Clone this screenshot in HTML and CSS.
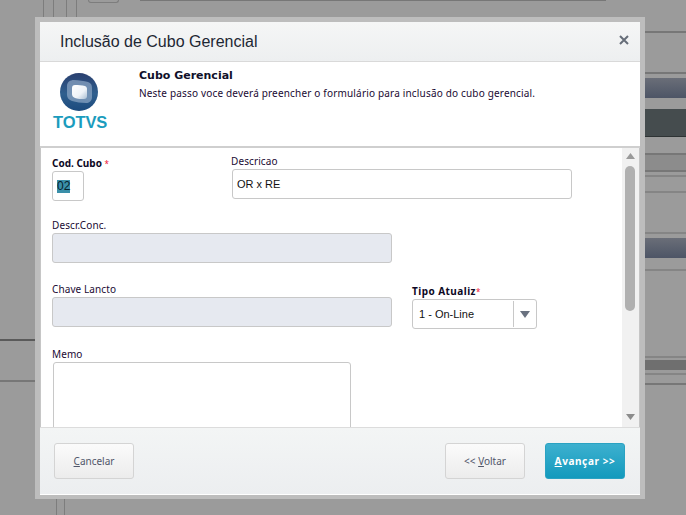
FILE: index.html
```html
<!DOCTYPE html>
<html lang="pt">
<head>
<meta charset="utf-8">
<title>Inclusão de Cubo Gerencial</title>
<link rel="stylesheet" href="styles.css">
</head>
<body>
<div class="backdrop">
  <div class="side side-left">
    <div class="s" style="height:339px"></div>
    <div class="s line-dark"></div>
    <div class="s" style="height:39px"></div>
    <div class="s line"></div>
  </div>
  <div class="middle">
    <div class="top-marks">
      <i class="vline v1"></i><i class="vline v2"></i><i class="vline v3"></i><i class="vline v4"></i><i class="mini-btn"></i><i class="top-rule"></i>
    </div>
    <div class="bottom-marks"><i class="vline b1"></i><i class="vline b2"></i></div>
  </div>
  <div class="side side-right">
    <div class="s" style="height:31px"></div>
    <div class="s line"></div>
    <div class="s" style="height:39px"></div>
    <div class="s line"></div>
    <div class="s" style="height:4px"></div>
    <div class="s band-blue" style="height:20px"></div>
    <div class="s" style="height:11px"></div>
    <div class="s band-dark" style="height:28px"></div>
    <div class="s" style="height:16px"></div>
    <div class="s line"></div>
    <div class="s band-soft" style="height:15px"></div>
    <div class="s line"></div>
    <div class="s" style="height:3px"></div>
    <div class="s line-soft"></div>
    <div class="s" style="height:14px"></div>
    <div class="s line-soft"></div>
    <div class="s" style="height:39px"></div>
    <div class="s line-soft"></div>
    <div class="s" style="height:4px"></div>
    <div class="s band-blue" style="height:20px"></div>
    <div class="s" style="height:11px"></div>
    <div class="s line-soft"></div>
    <div class="s" style="height:85px"></div>
    <div class="s line-soft"></div>
    <div class="s" style="height:2px"></div>
    <div class="s band-grey" style="height:10px"></div>
    <div class="s" style="height:3px"></div>
    <div class="s line-soft"></div>
    <div class="s" style="height:8px"></div>
    <div class="s line"></div>
  </div>
</div>

<div class="modal">
  <div class="dialog">
    <header class="head">
      <h1 class="title">Inclusão de Cubo Gerencial</h1>
      <button class="close" type="button" aria-label="Fechar">
        <svg width="10" height="10" viewBox="0 0 10 10"><path d="M1 1 9 9M9 1 1 9" stroke="#666d78" stroke-width="2" fill="none"/></svg>
      </button>
    </header>

    <section class="intro">
      <div class="brand">
        <svg class="globe" width="38" height="38" viewBox="0 0 38 38">
          <defs>
            <linearGradient id="ball" x1="0" y1="0" x2="0" y2="1">
              <stop offset="0" stop-color="#2a3f6f"/>
              <stop offset=".55" stop-color="#2f5f8e"/>
              <stop offset="1" stop-color="#1c4a7d"/>
            </linearGradient>
            <linearGradient id="pane" x1="0" y1="0" x2="1" y2="1">
              <stop offset="0" stop-color="#ffffff"/>
              <stop offset=".6" stop-color="#eef3f8"/>
              <stop offset="1" stop-color="#a9bed3"/>
            </linearGradient>
          </defs>
          <circle cx="19" cy="19" r="19" fill="url(#ball)"/>
          <path d="M7 13c0-4 3-6 7-6 5 0 10 1 14 2 3 1 4 3 4 6v9c0 4-3 6-6 6-5 0-10-1-14-2-3-1-5-3-5-6z" fill="#8fa8c6" opacity=".7"/>
          <path d="M12 15c0-2 1-3 3-3 3 0 7 0 10 1 2 1 2 2 2 4v6c0 2-1 3-3 3-3 0-7 0-9-1-2-1-3-2-3-4z" fill="url(#pane)"/>
        </svg>
        <span class="wordmark">TOTVS</span>
      </div>
      <div class="intro-text">
        <h2 class="intro-title">Cubo Gerencial</h2>
        <p class="intro-desc">Neste passo voce deverá preencher o formulário para inclusão do cubo gerencial.</p>
      </div>
    </section>

    <section class="pane">
      <form class="form">
        <div class="row row-first">
          <div class="field field-code">
            <label class="label label-strong">Cod. Cubo <b class="req">*</b></label>
            <div class="input input-code"><span class="selected">02</span></div>
          </div>
          <div class="field">
            <label class="label label-shift">Descricao</label>
            <div class="input input-wide">OR x RE</div>
          </div>
        </div>
        <div class="row row-second">
          <div class="field">
            <label class="label">Descr.Conc.</label>
            <div class="input input-mid disabled"></div>
          </div>
        </div>
        <div class="row row-third">
          <div class="field">
            <label class="label">Chave Lancto</label>
            <div class="input input-mid disabled"></div>
          </div>
          <div class="field field-type">
            <label class="label label-strong label-wide">Tipo Atualiz<b class="req">*</b></label>
            <div class="select">
              <span class="select-value">1 - On-Line</span>
              <span class="select-arrow"><svg width="10" height="7" viewBox="0 0 10 7"><path d="M0 0h10L5 7z" fill="#6a7280"/></svg></span>
            </div>
          </div>
        </div>
        <div class="row row-fourth">
          <div class="field">
            <label class="label">Memo</label>
            <div class="memo"></div>
          </div>
        </div>
      </form>
      <div class="scrollbar">
        <svg class="arrow" width="9" height="6" viewBox="0 0 9 6"><path d="M4.5 0 9 6H0z" fill="#9a9a9a"/></svg>
        <div class="thumb-track"><div class="thumb"></div></div>
        <svg class="arrow" width="9" height="6" viewBox="0 0 9 6"><path d="M0 0h9L4.500 6z" fill="#8c8c8c"/></svg>
      </div>
    </section>

    <footer class="foot">
      <button class="btn" type="button"><u>C</u>ancelar</button>
      <div class="foot-right">
        <button class="btn" type="button">&lt;&lt; <u>V</u>oltar</button>
        <button class="btn btn-primary" type="button"><u>A</u>vançar &gt;&gt;</button>
      </div>
    </footer>
  </div>
</div>
</body>
</html>
```
FILE: styles.css
```css
* { box-sizing: border-box; }
html, body { margin: 0; padding: 0; }
body {
  width: 686px;
  height: 515px;
  overflow: hidden;
  position: relative;
  background: #9b9b9b;
  font-family: "Liberation Sans", Arial, sans-serif;
}

/* dimmed page behind the dialog */
.backdrop { display: flex; width: 686px; height: 515px; }
.side { flex: none; }
.side-left { width: 35px; }
.side-right { width: 41px; }
.middle { flex: 1; display: flex; flex-direction: column; justify-content: space-between; }
.s { display: block; }
.line { height: 2px; background: #777; }
.line-dark { height: 2px; background: #5a5a5a; }
.line-soft { height: 2px; background: #858585; }
.band-blue { background: linear-gradient(#6a6e78, #4d5566); }
.band-dark { background: #454c4e; border-bottom: 1px solid #2e3334; }
.band-soft { background: #8c8c8c; }
.band-grey { background: #6f6f6f; }
.top-marks { height: 17px; display: flex; }
.bottom-marks { height: 16px; display: flex; }
.vline { display: block; width: 1px; background: #7d7d7d; }
.v1 { margin-left: 8px; }
.v2 { margin-left: 9px; }
.v3 { margin-left: 12px; }
.v4 { margin-left: 9px; }
.mini-btn { display: block; width: 31px; height: 3px; margin-left: 11px; border: 1px solid #7d7d7d; border-top: 0; border-radius: 0 0 3px 3px; }
.top-rule { display: block; width: 466px; height: 1px; margin-left: 21px; background: #777; }
.b1 { margin-left: 21px; }
.b2 { margin-left: 7px; }

/* dialog */
.modal {
  position: absolute;
  left: 35px;
  top: 17px;
  width: 610px;
  height: 482px;
  padding: 5px 5px 4px;
  background: #bdbdbd;
}
.dialog {
  display: flex;
  flex-direction: column;
  height: 473px;
  background: #c6c6c6;
}
.head {
  flex: none;
  height: 40px;
  padding: 0 11px 0 20px;
  display: flex;
  align-items: center;
  justify-content: space-between;
  background: linear-gradient(#f5f6f6, #edeff0);
  border-bottom: 1px solid #d9d9d9;
}
.title {
  margin: 0;
  font-size: 16px;
  font-weight: 400;
  color: #1d2733;
}
.close {
  width: 10px;
  height: 10px;
  margin-bottom: 4px;
  padding: 0;
  border: 0;
  background: none;
  display: block;
}
.close svg { display: block; }

.intro {
  flex: none;
  height: 86px;
  display: flex;
  border-bottom: 2px solid #cfcfcf;
  background: #fff;
}
.brand {
  flex: none;
  width: 99px;
  padding: 11px 0 0 13px;
  display: flex;
  flex-direction: column;
  align-items: flex-start;
}
.globe { display: block; margin-left: 7px; }
.wordmark {
  margin-top: 3px;
  font-size: 16.5px;
  line-height: 16px;
  font-weight: 700;
  letter-spacing: -.1px;
  color: #1b9cbd;
}
.intro-text { padding-top: 7px; }
.intro-title {
  margin: 0;
  font-family: "DejaVu Sans", Verdana, sans-serif;
  font-size: 11px;
  line-height: 14px;
  font-weight: 700;
  color: #10102a;
}
.intro-desc {
  margin: 3px 0 0;
  font-family: "Noto Sans", Tahoma, sans-serif;
  font-size: 10px;
  line-height: 14px;
  letter-spacing: .175px;
  color: #1a0a33;
}

/* scrolling form area */
.pane {
  flex: none;
  height: 279px;
  display: flex;
  margin: 0 1px;
  overflow: hidden;
}
.form {
  flex: 1;
  min-width: 0;
  padding: 5px 0 0 11px;
  background: #fff;
}
.row { display: flex; align-items: flex-start; }
.row-second { margin-top: 16px; }
.row-third { margin-top: 18px; }
.row-fourth { margin-top: 17px; }
.field { flex: none; }
.field-code { width: 180px; padding-top: 2px; }
.field-type { margin-left: 20px; padding-top: 2px; }
.label {
  display: block;
  height: 16px;
  font-family: "Noto Sans", Tahoma, sans-serif;
  font-size: 10px;
  line-height: 16px;
  letter-spacing: .1px;
  color: #1a0a33;
}
.label-strong { font-weight: 700; letter-spacing: 0; color: #0d0824; }
.label-wide { letter-spacing: .45px; }
.label-shift { margin-left: -1px; }
.req { color: #ee1133; font-size: 8px; font-weight: 400; }
.input {
  height: 30px;
  border: 1px solid #c8c8c8;
  border-radius: 3px;
  background: #fff;
  padding-left: 4px;
  font-size: 11px;
  line-height: 28px;
  color: #111;
}
.input-code { width: 32px; font-size: 12px; }
.input-wide { width: 340px; }
.input-mid { width: 340px; }
.disabled { background: #e6e9f0; }
.selected { background: #3a8fa9; color: #06222e; display: inline-block; line-height: 13px; }
.select {
  width: 125px;
  height: 30px;
  display: flex;
  border: 1px solid #c8c8c8;
  border-radius: 3px;
  background: #fff;
  font-size: 11px;
  line-height: 28px;
  color: #111;
}
.select-value { flex: 1; padding-left: 6px; }
.select-arrow {
  flex: none;
  width: 23px;
  margin: 1px 0;
  border-left: 1px solid #c8c8c8;
  display: flex;
  align-items: center;
  justify-content: center;
}
.memo {
  width: 298px;
  height: 120px;
  margin-left: 1px;
  border: 1px solid #c8c8c8;
  border-radius: 3px;
  background: #fff;
}

/* scrollbar */
.scrollbar {
  flex: none;
  width: 17px;
  background: #f1f1f1;
  display: flex;
  flex-direction: column;
  align-items: center;
  padding: 5px 0 7px;
}
.arrow { display: block; flex: none; }
.thumb-track { flex: 1; width: 100%; padding: 7px 4px 0 3px; }
.thumb { width: 10px; height: 145px; border-radius: 5px; background: #b0b0b0; }

/* footer */
.foot {
  flex: 1;
  display: flex;
  justify-content: space-between;
  padding: 15px 15px 0 14px;
  background: linear-gradient(#f3f5f5, #eceef0);
  border-top: 1px solid #dcdcdc;
  border-bottom: 1px solid #fff;
}
.foot-right { display: flex; gap: 20px; }
.btn {
  width: 80px;
  height: 36px;
  padding: 0;
  border: 1px solid #d4d4d4;
  border-radius: 3px;
  background: linear-gradient(#fbfbfb, #ececec);
  font-family: "Noto Sans", Tahoma, sans-serif;
  font-size: 10px;
  color: #50566a;
}
.btn-primary {
  border-color: #2aa2c2;
  background: linear-gradient(#3db0cf, #139abd);
  color: #fff;
  font-weight: 700;
  letter-spacing: .6px;
}
```
